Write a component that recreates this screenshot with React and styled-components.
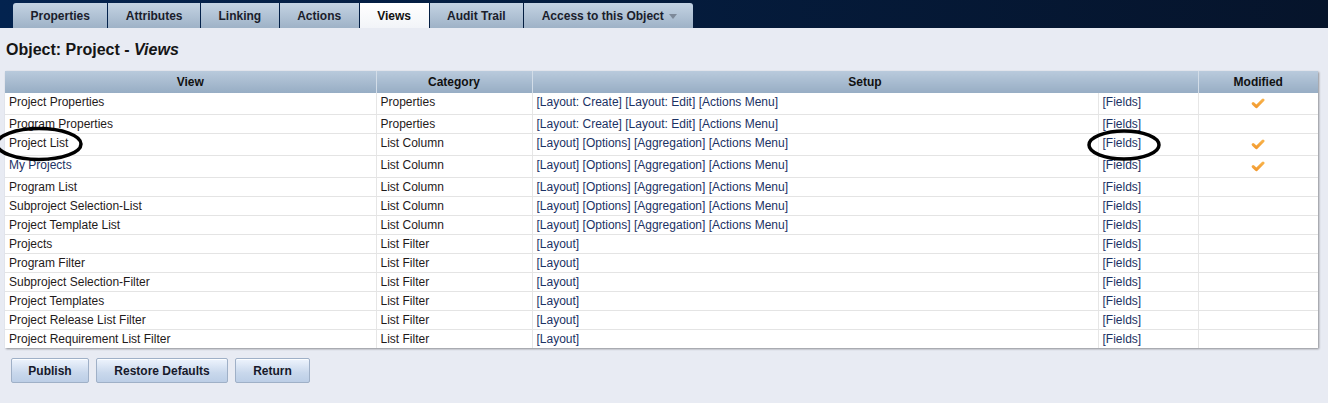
import React from 'react';
import styled, { createGlobalStyle } from 'styled-components';

const GlobalStyle = createGlobalStyle`
  html, body {
    margin: 0;
    padding: 0;
    background: #e8ebf3;
    font-family: "Liberation Sans", Arial, sans-serif;
  }
`;

const Page = styled.div`
  position: relative;
  width: 1328px;
  height: 403px;
  overflow: hidden;
  background: #e8ebf3;
`;

const TopBar = styled.div`
  height: 28px;
  background: linear-gradient(to right, #03234f 0%, #041d40 40%, #06142b 100%);
  display: flex;
  align-items: flex-end;
  padding-left: 13px;
  gap: 1px;
  box-sizing: border-box;
`;

const Tab = styled.div`
  height: 25px;
  padding: ${p => (p.$last ? '0 16px 0 17.5px' : '0 17.5px')};
  display: flex;
  align-items: center;
  gap: 5px;
  font-size: 12px;
  font-weight: bold;
  color: ${p => (p.$active ? '#111' : '#1a1d2c')};
  background: ${p =>
    p.$active
      ? 'linear-gradient(#ffffff, #f2f4f8)'
      : 'linear-gradient(#c4d3e3, #9eb2c7)'};
  border-radius: ${p => (p.$last ? '0 3px 0 0' : p.$first ? '3px 0 0 0' : '0')};
  box-sizing: border-box;
  white-space: nowrap;
`;

const Caret = styled.span`
  width: 0;
  height: 0;
  border-left: 4px solid transparent;
  border-right: 4px solid transparent;
  border-top: 5px solid #7d8999;
  margin-top: 1px;
`;

const Content = styled.div`
  padding: 12px 10px 0 5px;
`;

const Title = styled.h1`
  margin: 0 0 12px 1px;
  font-size: 16px;
  line-height: 19px;
  font-weight: bold;
  color: #151515;

  em {
    font-style: italic;
  }
`;

const Table = styled.table`
  width: 1313px;
  table-layout: fixed;
  border-collapse: collapse;
  background: #fff;
  box-shadow: 1px 1px 2px rgba(0, 0, 0, 0.4);
  font-size: 12px;
`;

const Th = styled.th`
  height: 22px;
  padding: 0 4px;
  font-weight: bold;
  font-size: 12px;
  color: #111;
  text-align: center;
  background: linear-gradient(#b9cadc, #97adc4);
  border-right: 1px solid #d3dde8;
  &:last-child {
    border-right: none;
  }
`;

const Td = styled.td`
  padding: 2px 4px;
  line-height: 14px;
  vertical-align: top;
  text-align: ${p => (p.$center ? 'center' : 'left')};
  color: ${p => (p.$link ? '#1b3264' : '#1f1a1a')};
  border-bottom: 1px solid #e4e4e4;
  border-right: 1px solid #e6e6e6;
  white-space: nowrap;
  overflow: hidden;
  &:last-child {
    border-right: none;
  }
`;

const Row = styled.tr`
  &:last-child td {
    border-bottom: none;
  }
`;

const LinkText = styled.span`
  color: #1b3264;
`;

const CheckIcon = styled.svg`
  display: block;
  margin: 3px auto;
`;

const ButtonBar = styled.div`
  display: flex;
  gap: 7px;
  margin: 10px 0 0 6px;
`;

const Button = styled.button`
  width: ${p => p.$w}px;
  height: 25px;
  padding: 0;
  font-family: "Liberation Sans", Arial, sans-serif;
  font-size: 12px;
  font-weight: bold;
  color: #17192a;
  background: linear-gradient(#eef4fd, #c9d8ec 60%, #bccee6);
  border: 1px solid #9fb0c7;
  border-radius: 2px;
  box-shadow: inset 0 1px 0 #fbfdff;
`;

const Annotation = styled.svg`
  position: absolute;
  pointer-events: none;
`;

const Check = () => (
  <CheckIcon width="14" height="11" viewBox="0 0 14 11">
    <defs>
      <linearGradient id="chk" x1="0" y1="0" x2="0" y2="1">
        <stop offset="0" stopColor="#f8b24a" />
        <stop offset="1" stopColor="#f29a30" />
      </linearGradient>
    </defs>
    <path
      d="M2.2 5.6 L5.4 8.6 L12 2"
      fill="none"
      stroke="url(#chk)"
      strokeWidth="3"
      strokeLinecap="round"
      strokeLinejoin="round"
    />
  </CheckIcon>
);

const propsSetup = ['[Layout: Create]', '[Layout: Edit]', '[Actions Menu]'];
const columnSetup = ['[Layout]', '[Options]', '[Aggregation]', '[Actions Menu]'];
const filterSetup = ['[Layout]'];

const rows = [
  { view: 'Project Properties', cat: 'Properties', setup: propsSetup, mod: true },
  { view: 'Program Properties', cat: 'Properties', setup: propsSetup },
  { view: 'Project List', cat: 'List Column', setup: columnSetup, mod: true },
  { view: 'My Projects', cat: 'List Column', setup: columnSetup, mod: true, link: true },
  { view: 'Program List', cat: 'List Column', setup: columnSetup },
  { view: 'Subproject Selection-List', cat: 'List Column', setup: columnSetup },
  { view: 'Project Template List', cat: 'List Column', setup: columnSetup },
  { view: 'Projects', cat: 'List Filter', setup: filterSetup },
  { view: 'Program Filter', cat: 'List Filter', setup: filterSetup },
  { view: 'Subproject Selection-Filter', cat: 'List Filter', setup: filterSetup },
  { view: 'Project Templates', cat: 'List Filter', setup: filterSetup },
  { view: 'Project Release List Filter', cat: 'List Filter', setup: filterSetup },
  { view: 'Project Requirement List Filter', cat: 'List Filter', setup: filterSetup },
];

const tabs = ['Properties', 'Attributes', 'Linking', 'Actions', 'Views', 'Audit Trail'];

export default function App() {
  return (
    <Page>
      <GlobalStyle />
      <TopBar>
        {tabs.map((t, i) => (
          <Tab key={t} $active={t === 'Views'} $first={i === 0}>
            {t}
          </Tab>
        ))}
        <Tab $last>
          Access to this Object <Caret />
        </Tab>
      </TopBar>
      <Content>
        <Title>
          Object: Project - <em>Views</em>
        </Title>
        <Table>
          <colgroup>
            <col style={{ width: 371 }} />
            <col style={{ width: 156 }} />
            <col style={{ width: 566 }} />
            <col style={{ width: 100 }} />
            <col style={{ width: 120 }} />
          </colgroup>
          <thead>
            <tr>
              <Th>View</Th>
              <Th>Category</Th>
              <Th colSpan={2}>Setup</Th>
              <Th>Modified</Th>
            </tr>
          </thead>
          <tbody>
            {rows.map(r => (
              <Row key={r.view}>
                <Td $link={r.link}>{r.view}</Td>
                <Td>{r.cat}</Td>
                <Td>
                  {r.setup.map((s, i) => (
                    <React.Fragment key={s}>
                      {i > 0 && ' '}
                      <LinkText>{s}</LinkText>
                    </React.Fragment>
                  ))}
                </Td>
                <Td $link>[Fields]</Td>
                <Td $center>{r.mod && <Check />}</Td>
              </Row>
            ))}
          </tbody>
        </Table>
        <ButtonBar>
          <Button $w={78}>Publish</Button>
          <Button $w={132}>Restore Defaults</Button>
          <Button $w={75}>Return</Button>
        </ButtonBar>
      </Content>
      <Annotation width="90" height="40" viewBox="0 0 90 40" style={{ left: -6, top: 125 }}>
        <ellipse cx="45" cy="19" rx="42" ry="15.5" fill="none" stroke="#000" strokeWidth="3.5" />
      </Annotation>
      <Annotation width="80" height="36" viewBox="0 0 80 36" style={{ left: 1085, top: 127 }}>
        <ellipse cx="39" cy="18" rx="35" ry="14" fill="none" stroke="#000" strokeWidth="3.5" />
      </Annotation>
    </Page>
  );
}
